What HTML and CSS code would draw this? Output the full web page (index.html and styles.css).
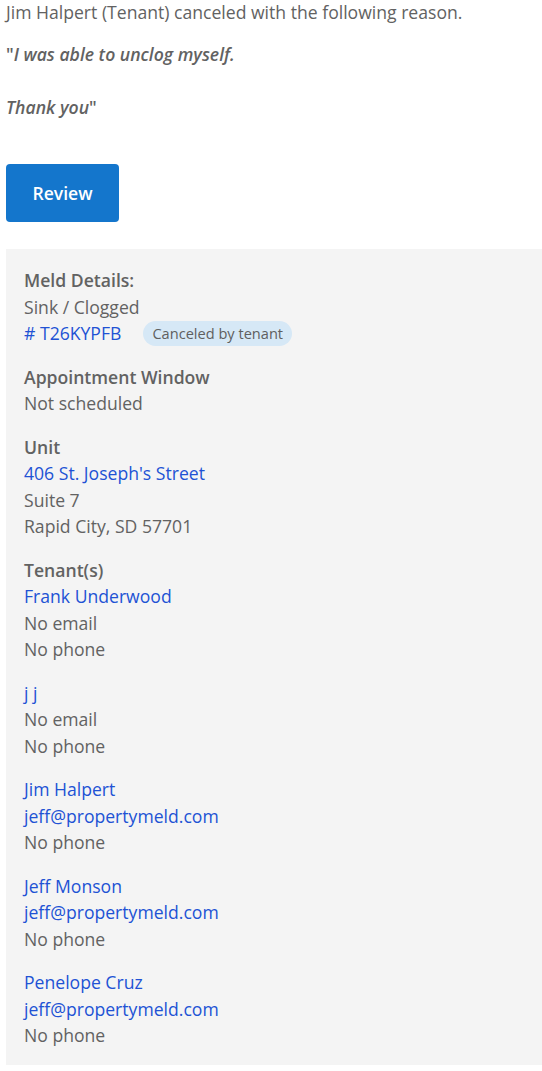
FILE: index.html
```html
<!DOCTYPE html>
<html>
<head>
<meta charset="utf-8">
<link rel="stylesheet" href="styles.css">
</head>
<body>
<div class="page">
  <p class="intro">Jim Halpert (Tenant) canceled with the following reason.</p>
  <p class="quote">"<em>I was able to unclog myself.<br><br>Thank you</em>"</p>
  <div class="btn-row"><a class="btn" href="#">Review</a></div>
  <div class="panel">
    <div class="block">
      <div class="label">Meld Details:</div>
      <div>Sink / Clogged</div>
      <div class="ref-row"><a class="link" href="#"># T26KYPFB</a><span class="badge">Canceled by tenant</span></div>
    </div>
    <div class="block">
      <div class="label">Appointment Window</div>
      <div>Not scheduled</div>
    </div>
    <div class="block">
      <div class="label">Unit</div>
      <a class="link" href="#">406 St. Joseph's Street</a>
      <div>Suite 7</div>
      <div>Rapid City, SD 57701</div>
    </div>
    <div class="block">
      <div class="label">Tenant(s)</div>
      <a class="link" href="#">Frank Underwood</a>
      <div>No email</div>
      <div>No phone</div>
    </div>
    <div class="block">
      <a class="link" href="#">j j</a>
      <div>No email</div>
      <div>No phone</div>
    </div>
    <div class="block">
      <a class="link" href="#">Jim Halpert</a>
      <a class="link" href="#">jeff@propertymeld.com</a>
      <div>No phone</div>
    </div>
    <div class="block">
      <a class="link" href="#">Jeff Monson</a>
      <a class="link" href="#">jeff@propertymeld.com</a>
      <div>No phone</div>
    </div>
    <div class="block">
      <a class="link" href="#">Penelope Cruz</a>
      <a class="link" href="#">jeff@propertymeld.com</a>
      <div>No phone</div>
    </div>
  </div>
</div>
</body>
</html>
```

FILE: styles.css
```css
html, body {
  margin: 0;
  padding: 0;
  background: #ffffff;
}
body {
  font-family: "Open Sans", "Liberation Sans", sans-serif;
  font-size: 17.6px;
  line-height: 26.5px;
  color: #626262;
}
.page {
  padding: 0 0 0 6px;
}
p {
  margin: 0;
}
.intro {
  margin-top: -1px;
}
.quote {
  margin-top: 15px;
  font-weight: 600;
}
.quote em {
  font-style: italic;
}
.btn-row {
  margin-top: 44px;
  display: flex;
}
.btn {
  display: flex;
  align-items: center;
  justify-content: center;
  width: 113px;
  height: 58px;
  background: #1476cc;
  color: #ffffff;
  font-weight: 600;
  text-decoration: none;
  border-radius: 4px;
}
.panel {
  margin-top: 27px;
  background: #f4f4f4;
  padding: 18px 18px 16px 18px;
  display: flex;
  flex-direction: column;
  gap: 17px;
}
.block {
  display: flex;
  flex-direction: column;
}
.label {
  font-weight: 600;
}
.link {
  color: #2152d4;
  text-decoration: none;
}
.ref-row {
  display: flex;
  align-items: center;
  gap: 22px;
}
.badge {
  background: #d6e8f6;
  color: #5f5f5f;
  font-size: 14.6px;
  line-height: 25px;
  padding: 0 9px;
  border-radius: 13px;
}
```
